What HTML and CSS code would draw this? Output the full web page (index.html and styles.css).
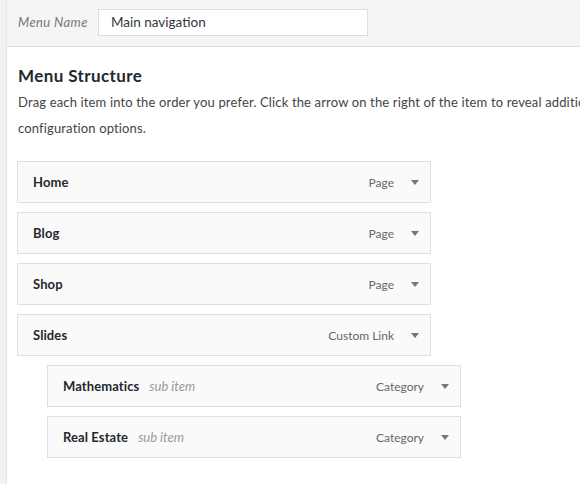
FILE: index.html
```html
<!DOCTYPE html>
<html>
<head>
<meta charset="utf-8">
<link rel="stylesheet" href="styles.css">
</head>
<body>
<div class="page">
  <div class="rail"></div>
  <div class="main">
    <div class="header">
      <label class="name-label">Menu Name</label>
      <input class="name-input" type="text" value="Main navigation">
    </div>
    <div class="content">
      <h3 class="title">Menu Structure</h3>
      <p class="desc">Drag each item into the order you prefer. Click the arrow on the right of the item to reveal additional configuration options.</p>
      <ul class="menu">
        <li class="item"><span class="item-title">Home</span><span class="item-type">Page</span><span class="arrow"></span></li>
        <li class="item"><span class="item-title">Blog</span><span class="item-type">Page</span><span class="arrow"></span></li>
        <li class="item"><span class="item-title">Shop</span><span class="item-type">Page</span><span class="arrow"></span></li>
        <li class="item"><span class="item-title">Slides</span><span class="item-type">Custom Link</span><span class="arrow"></span></li>
        <li class="item sub"><span class="item-title">Mathematics</span><span class="sub-label">sub item</span><span class="item-type">Category</span><span class="arrow"></span></li>
        <li class="item sub"><span class="item-title">Real Estate</span><span class="sub-label">sub item</span><span class="item-type">Category</span><span class="arrow"></span></li>
      </ul>
    </div>
  </div>
</div>
</body>
</html>
```

FILE: styles.css
```css
html, body {
  margin: 0;
  padding: 0;
  background: #ffffff;
  font-family: Lato, "Open Sans", sans-serif;
  font-size: 13px;
  color: #444;
}
.page {
  display: flex;
  min-height: 484px;
  width: 580px;
  overflow: hidden;
}
.rail {
  width: 6px;
  flex: none;
  background: #f1f1f1;
  border-right: 1px solid #e5e5e5;
}
.main {
  flex: 1;
  min-width: 0;
}
.header {
  height: 47px;
  box-sizing: border-box;
  background: #f5f5f5;
  border-bottom: 1px solid #dfdfdf;
  display: flex;
  align-items: center;
  padding: 0 0 2px 11px;
}
.name-label {
  font-style: italic;
  color: #777;
  font-size: 13px;
  letter-spacing: 0.4px;
  width: 80px;
}
.name-input {
  width: 270px;
  height: 27px;
  box-sizing: border-box;
  border: 1px solid #ddd;
  background: #fff;
  font-family: Lato, "Open Sans", sans-serif;
  font-size: 13.5px;
  color: #32373c;
  padding: 0 12px;
  margin: 0;
  outline: none;
}
.content {
  padding: 16px 0 0 10px;
}
.title {
  margin: 0;
  font-size: 17px;
  font-weight: 700;
  letter-spacing: 0.4px;
  color: #23282d;
  line-height: 26px;
  padding-left: 1px;
}
.desc {
  margin: 0 0 0 1px;
  line-height: 26px;
  width: 620px;
  letter-spacing: 0.15px;
  color: #444;
}
.menu {
  list-style: none;
  margin: 20px 0 0 0;
  padding: 0;
  display: flex;
  flex-direction: column;
  gap: 9px;
}
.item {
  width: 414px;
  height: 42px;
  box-sizing: border-box;
  border: 1px solid #dfdfdf;
  background: #fafafa;
  display: flex;
  align-items: center;
  padding: 0 13px 0 15px;
}
.item.sub {
  margin-left: 30px;
}
.item-title {
  font-weight: 700;
  color: #23282d;
  font-size: 13px;
  letter-spacing: 0.1px;
}
.sub-label {
  font-style: italic;
  color: #999;
  margin-left: 10px;
}
.item-type {
  margin-left: auto;
  color: #666;
  font-size: 12px;
}
.arrow {
  width: 0;
  height: 0;
  border-left: 4px solid transparent;
  border-right: 4px solid transparent;
  border-top: 5px solid #777;
  margin-left: 17px;
  margin-right: -2px;
}
```
